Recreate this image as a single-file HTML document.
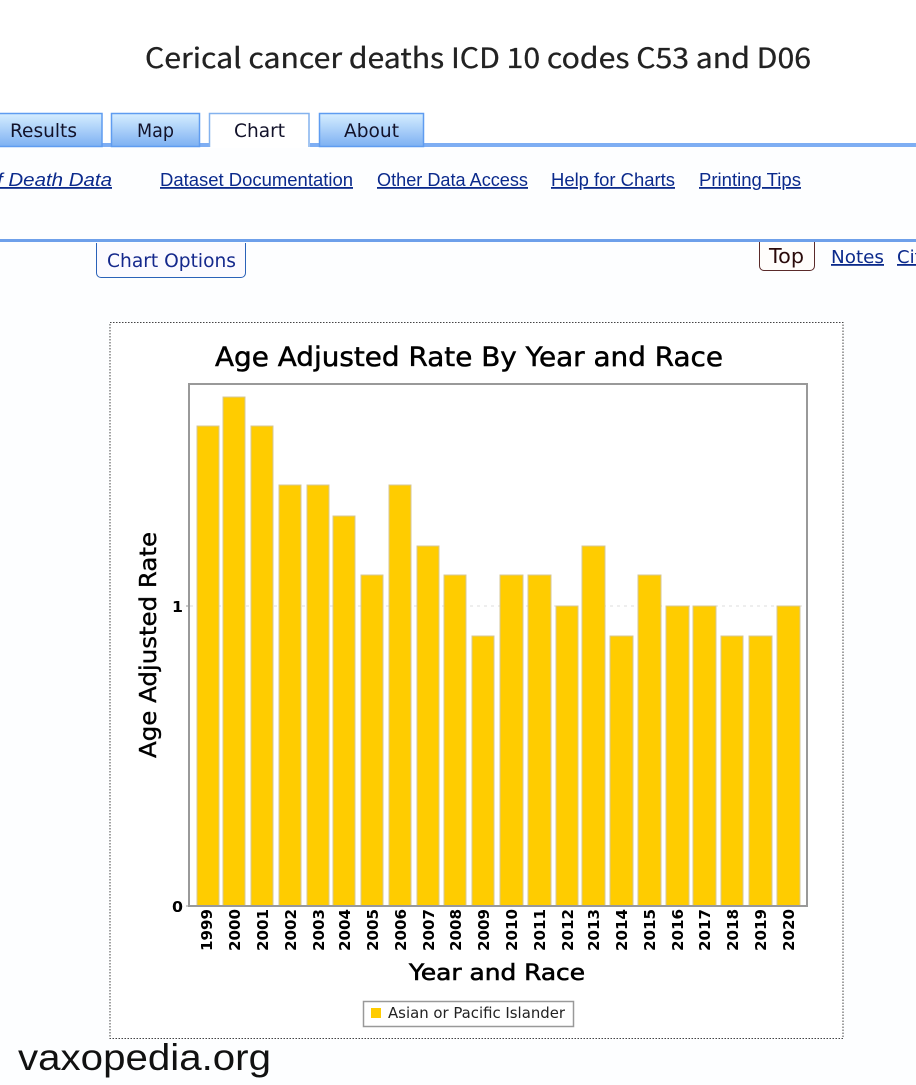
<!DOCTYPE html>
<html><head><meta charset="utf-8"><style>
html,body{margin:0;padding:0;background:#fdfeff;width:916px;height:1085px;overflow:hidden}
svg{display:block}
text{white-space:pre}
.v{font-family:"DejaVu Sans",sans-serif}
.l{font-family:"Liberation Sans",sans-serif;font-size:18px;fill:#0b2a8c;text-decoration:underline}
.y{font-family:"DejaVu Sans",sans-serif;font-size:15px;font-weight:bold;fill:#000}
</style></head><body>
<svg width="916" height="1085" viewBox="0 0 916 1085" xmlns="http://www.w3.org/2000/svg">
<defs><linearGradient id="g" x1="0" y1="0" x2="0" y2="1"><stop offset="0" stop-color="#d6eeff"/><stop offset="1" stop-color="#7db0f2"/></linearGradient></defs>
<rect width="916" height="1085" fill="#fdfeff"/>
<rect width="916" height="143" fill="#fff"/>
<text x="145" y="68" font-family="'Noto Sans CJK JP',sans-serif" font-size="28" font-weight="400" fill="#222" stroke="#222" stroke-width=".3" textLength="666" lengthAdjust="spacingAndGlyphs">Cerical cancer deaths ICD 10 codes C53 and D06</text>

<rect x="0" y="143" width="916" height="4" fill="#7eaef3"/>
<rect x="-2" y="113.500" width="104" height="33" fill="url(#g)" stroke="#5f9cf0" stroke-width="1.500"/>
<rect x="111.500" y="113.500" width="88" height="33" fill="url(#g)" stroke="#5f9cf0" stroke-width="1.500"/>
<rect x="209" y="113" width="101" height="35" fill="#fff"/>
<path d="M209.500 147V113.500H309V147" fill="none" stroke="#84b2ee" stroke-width="1.500"/>
<rect x="319.500" y="113.500" width="104" height="33" fill="url(#g)" stroke="#5f9cf0" stroke-width="1.500"/>
<g class="v" font-size="19" fill="#12122a">
<text x="10" y="137" textLength="67" lengthAdjust="spacingAndGlyphs">Results</text>
<text x="137" y="137" textLength="37" lengthAdjust="spacingAndGlyphs">Map</text>
<text x="234" y="137" textLength="51" lengthAdjust="spacingAndGlyphs">Chart</text>
<text x="344" y="137" textLength="55" lengthAdjust="spacingAndGlyphs">About</text>
</g>

<text class="l" x="-3" y="186" font-style="italic" textLength="115" lengthAdjust="spacingAndGlyphs">f Death Data</text>
<text class="l" x="160" y="186" textLength="193" lengthAdjust="spacingAndGlyphs">Dataset Documentation</text>
<text class="l" x="377" y="186" textLength="151" lengthAdjust="spacingAndGlyphs">Other Data Access</text>
<text class="l" x="551" y="186" textLength="124" lengthAdjust="spacingAndGlyphs">Help for Charts</text>
<text class="l" x="699" y="186" textLength="102" lengthAdjust="spacingAndGlyphs">Printing Tips</text>

<rect x="0" y="239" width="916" height="3" fill="#6ea0ea"/>

<path d="M96.500 243V273a4.500 4.500 0 0 0 4.500 4.500H241a4.500 4.500 0 0 0 4.500-4.500V243" fill="#fbfaff" stroke="#2a62b8"/>
<text class="v" x="107" y="267" font-size="19" fill="#14288c" textLength="129" lengthAdjust="spacingAndGlyphs">Chart Options</text>
<path d="M759.500 242V266a4.500 4.500 0 0 0 4.500 4.500H810a4.500 4.500 0 0 0 4.500-4.500V242" fill="#fffdfb" stroke="#5a2a2a"/>
<text class="v" x="769" y="263" font-size="20" fill="#2a0a0a" textLength="35" lengthAdjust="spacingAndGlyphs">Top</text>
<text class="v" x="831" y="263" font-size="18" fill="#0b2a8c" text-decoration="underline" textLength="53" lengthAdjust="spacingAndGlyphs">Notes</text>
<text class="v" x="897" y="263" font-size="18" fill="#0b2a8c" text-decoration="underline">Cite</text>

<rect x="110" y="322.500" width="733" height="716" fill="#fff" stroke="#444" stroke-dasharray="1.500 1.500"/>
<text class="v" x="215" y="366" font-size="27" fill="#000" stroke="#000" stroke-width=".5" textLength="508" lengthAdjust="spacingAndGlyphs">Age Adjusted Rate By Year and Race</text>

<line x1="190" y1="606" x2="806" y2="606" stroke="#ddd" stroke-dasharray="3 4"/>
<g fill="#fc0" stroke="#d6c797" stroke-width="1">
<rect x="197" y="426" width="22" height="480"/>
<rect x="223" y="397" width="22" height="509"/>
<rect x="251" y="426" width="22" height="480"/>
<rect x="279" y="485" width="22" height="421"/>
<rect x="307" y="485" width="22" height="421"/>
<rect x="333" y="516" width="22" height="390"/>
<rect x="361" y="575" width="22" height="331"/>
<rect x="389" y="485" width="22" height="421"/>
<rect x="417" y="546" width="22" height="360"/>
<rect x="444" y="575" width="22" height="331"/>
<rect x="472" y="636" width="22" height="270"/>
<rect x="500" y="575" width="23" height="331"/>
<rect x="528" y="575" width="23" height="331"/>
<rect x="556" y="606" width="22" height="300"/>
<rect x="582" y="546" width="23" height="360"/>
<rect x="610" y="636" width="23" height="270"/>
<rect x="638" y="575" width="23" height="331"/>
<rect x="666" y="606" width="23" height="300"/>
<rect x="693" y="606" width="23" height="300"/>
<rect x="721" y="636" width="22" height="270"/>
<rect x="749" y="636" width="23" height="270"/>
<rect x="777" y="606" width="23" height="300"/>
</g>
<rect x="189" y="384" width="618" height="522" fill="none" stroke="#999" stroke-width="2"/>
<line x1="186" y1="606" x2="189" y2="606" stroke="#999"/>
<line x1="186" y1="906" x2="189" y2="906" stroke="#999"/>
<text class="y" x="172" y="612" font-size="14" textLength="11" lengthAdjust="spacingAndGlyphs">1</text>
<text class="y" x="172" y="912" font-size="14" textLength="11" lengthAdjust="spacingAndGlyphs">0</text>

<text class="v" transform="translate(156,758) rotate(-90)" font-size="23" fill="#000" stroke="#000" stroke-width=".4" textLength="226" lengthAdjust="spacingAndGlyphs">Age Adjusted Rate</text>

<g class="y">
<text transform="translate(212,951) rotate(-90)" textLength="42" lengthAdjust="spacingAndGlyphs">1999</text>
<text transform="translate(240,951) rotate(-90)" textLength="42" lengthAdjust="spacingAndGlyphs">2000</text>
<text transform="translate(268,951) rotate(-90)" textLength="42" lengthAdjust="spacingAndGlyphs">2001</text>
<text transform="translate(296,951) rotate(-90)" textLength="42" lengthAdjust="spacingAndGlyphs">2002</text>
<text transform="translate(324,951) rotate(-90)" textLength="42" lengthAdjust="spacingAndGlyphs">2003</text>
<text transform="translate(350,951) rotate(-90)" textLength="42" lengthAdjust="spacingAndGlyphs">2004</text>
<text transform="translate(378,951) rotate(-90)" textLength="42" lengthAdjust="spacingAndGlyphs">2005</text>
<text transform="translate(406,951) rotate(-90)" textLength="42" lengthAdjust="spacingAndGlyphs">2006</text>
<text transform="translate(434,951) rotate(-90)" textLength="42" lengthAdjust="spacingAndGlyphs">2007</text>
<text transform="translate(461,951) rotate(-90)" textLength="42" lengthAdjust="spacingAndGlyphs">2008</text>
<text transform="translate(489,951) rotate(-90)" textLength="42" lengthAdjust="spacingAndGlyphs">2009</text>
<text transform="translate(517,951) rotate(-90)" textLength="42" lengthAdjust="spacingAndGlyphs">2010</text>
<text transform="translate(545,951) rotate(-90)" textLength="42" lengthAdjust="spacingAndGlyphs">2011</text>
<text transform="translate(573,951) rotate(-90)" textLength="42" lengthAdjust="spacingAndGlyphs">2012</text>
<text transform="translate(599,951) rotate(-90)" textLength="42" lengthAdjust="spacingAndGlyphs">2013</text>
<text transform="translate(627,951) rotate(-90)" textLength="42" lengthAdjust="spacingAndGlyphs">2014</text>
<text transform="translate(655,951) rotate(-90)" textLength="42" lengthAdjust="spacingAndGlyphs">2015</text>
<text transform="translate(683,951) rotate(-90)" textLength="42" lengthAdjust="spacingAndGlyphs">2016</text>
<text transform="translate(710,951) rotate(-90)" textLength="42" lengthAdjust="spacingAndGlyphs">2017</text>
<text transform="translate(738,951) rotate(-90)" textLength="42" lengthAdjust="spacingAndGlyphs">2018</text>
<text transform="translate(766,951) rotate(-90)" textLength="42" lengthAdjust="spacingAndGlyphs">2019</text>
<text transform="translate(794,951) rotate(-90)" textLength="42" lengthAdjust="spacingAndGlyphs">2020</text>
</g>

<text class="v" x="409" y="980" font-size="22" fill="#000" stroke="#000" stroke-width=".6" textLength="176" lengthAdjust="spacingAndGlyphs">Year and Race</text>

<rect x="363.500" y="1001.500" width="210" height="25" fill="#fff" stroke="#999" stroke-width="1.500"/>
<rect x="371" y="1008" width="10" height="10" fill="#fc0"/>
<text class="v" x="388" y="1018" font-size="15" fill="#222" textLength="177" lengthAdjust="spacingAndGlyphs">Asian or Pacific Islander</text>

<text x="18" y="1070" font-family="'Liberation Sans',sans-serif" font-size="37" fill="#111" textLength="253" lengthAdjust="spacingAndGlyphs">vaxopedia.org</text>
</svg>
</body></html>
